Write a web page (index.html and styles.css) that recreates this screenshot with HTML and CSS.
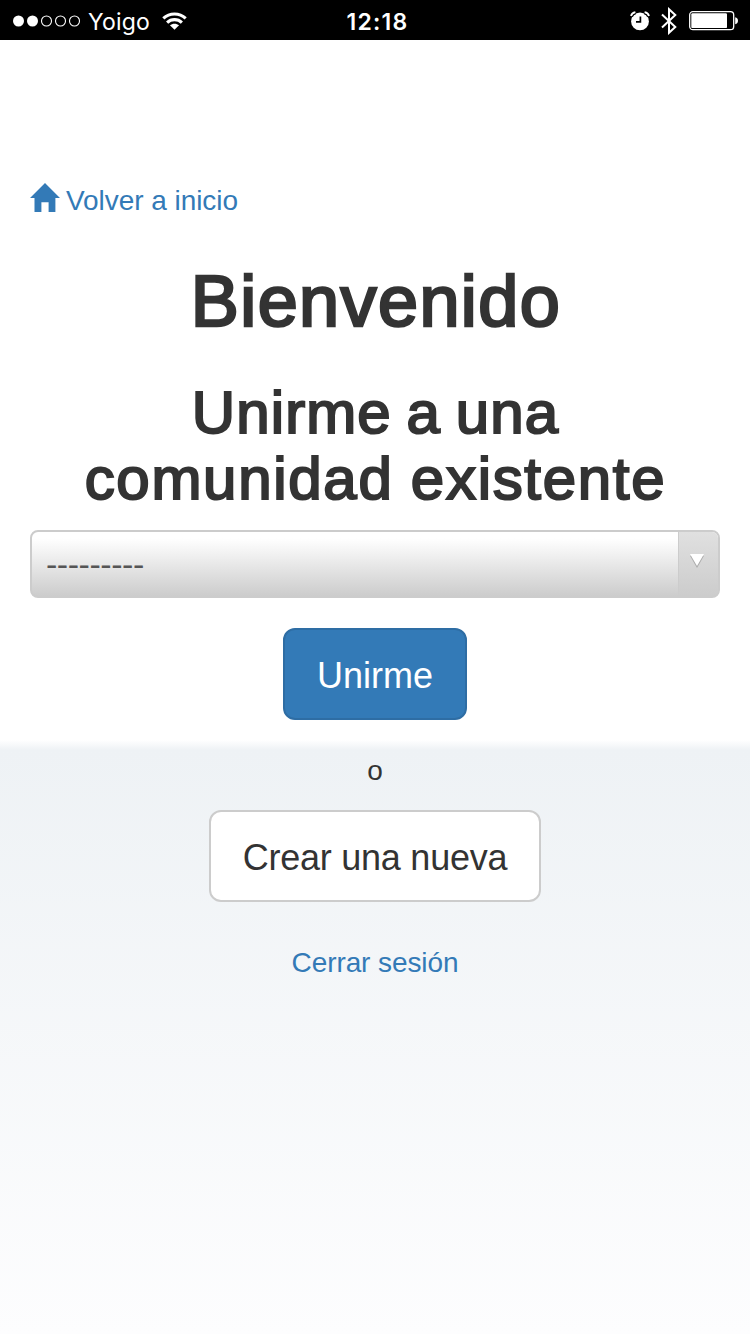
FILE: index.html
```html
<!DOCTYPE html>
<html lang="es">
<head>
<meta charset="utf-8">
<meta name="viewport" content="width=750">
<title>Bienvenido</title>
<link rel="stylesheet" href="styles.css">
</head>
<body>
<header class="status">
  <div class="status-left">
    <svg class="signal" width="68" height="12" viewBox="0 0 68 12"><g fill="#fff"><circle cx="5.5" cy="6" r="5.5"/><circle cx="19.5" cy="6" r="5.5"/></g><g fill="none" stroke="#fff" stroke-width="1.1"><circle cx="33.5" cy="6" r="5"/><circle cx="47.5" cy="6" r="5"/><circle cx="61.5" cy="6" r="5"/></g></svg>
    <span class="carrier">Yoigo</span>
    <svg class="wifi" width="25" height="18" viewBox="0 0 26 19"><g fill="none" stroke="#fff" stroke-width="3.3"><path d="M1.2 6.7C7.8.5 18.2.5 24.8 6.7"/><path d="M5.2 11.1C9.5 7 16.5 7 20.8 11.1"/></g><path d="M8.2 14.1C10.8 11.8 15.2 11.8 17.8 14.1L13 18.8Z" fill="#fff"/></svg>
  </div>
  <span class="clock">12:18</span>
  <div class="status-right">
    <svg width="20" height="20" viewBox="0 0 20 20"><circle cx="10" cy="10.4" r="8.9" fill="#fff"/><path d="M1 5.6Q1.8 2.4 5.4 1.4M19 5.6Q18.2 2.4 14.6 1.4" fill="none" stroke="#000" stroke-width="4"/><path d="M1 5Q1.8 2 5.4 1.2M19 5Q18.2 2 14.6 1.2" fill="none" stroke="#fff" stroke-width="1.8"/><path d="M10.4 5.4V10.9H6" fill="none" stroke="#000" stroke-width="1.7"/></svg>
    <svg class="bluetooth" width="16" height="28" viewBox="0 0 16 28"><path d="M1 7.5L14.3 20L8 25.8V2.2L14.3 8L1 20.5" fill="none" stroke="#fff" stroke-width="2"/></svg>
    <svg class="battery" width="49" height="20" viewBox="0 0 49 20"><rect x=".7" y=".7" width="44" height="18" rx="3.2" fill="none" stroke="#fff" stroke-width="1.3"/><rect x="2.3" y="2.3" width="35.7" height="14.8" rx="1.2" fill="#fff"/><path d="M46.2 6.3Q49 7 49 9.8T46.2 13.3Z" fill="#fff"/></svg>
  </div>
</header>
<main class="page">
  <a class="link home"><svg width="30" height="29" viewBox="0 0 30 29"><path d="M15 0L30 15H25.4V29H18.6V19.3H11.4V29H4.5V15H0Z" fill="#337ab7"/></svg><span>Volver a inicio</span></a>
  <h1 class="title">Bienvenido</h1>
  <h2 class="subtitle"><span class="subtitle-lead">Unirme a una</span><br>comunidad existente</h2>
  <div class="select">
    <span class="select-value">---------</span>
    <span class="select-arrow"><svg width="16" height="16" viewBox="0 0 16 16"><path d="M1 2.8H15L8 15Z" fill="#aaa"/><path d="M1 1H15L8 13Z" fill="#fff"/></svg></span>
  </div>
  <button class="btn btn-primary">Unirme</button>
</main>
<section class="footer">
  <p class="or">o</p>
  <button class="btn btn-default">Crear una nueva</button>
  <a class="link logout">Cerrar sesión</a>
</section>
</body>
</html>
```

FILE: styles.css
```css
* { box-sizing: border-box; }
body {
  margin: 0;
  height: 1334px;
  display: flex;
  flex-direction: column;
  background: #fff;
  color: #333;
  font-family: "Liberation Sans", Arial, sans-serif;
  font-size: 28px;
  line-height: 40px;
}
svg { display: block; flex: none; }
.status {
  height: 40px;
  flex: none;
  display: grid;
  grid-template-columns: 1fr auto 1fr;
  align-items: center;
  padding: 0 12px 0 13px;
  background: #000;
  color: #fff;
  font-family: Inter, Roboto, sans-serif;
  font-size: 23px;
}
.status-left, .status-right { display: flex; align-items: center; }
.status-right { justify-content: flex-end; }
.carrier { margin-left: 7px; padding-top: 2px; letter-spacing: 0.2px; }
.wifi { margin-left: 12px; }
.clock { padding: 2px 0 0 4px; font-weight: 600; font-size: 23px; letter-spacing: 1.2px; }
.bluetooth { margin-left: 11px; }
.battery { margin-left: 12px; }
.page {
  height: 710px;
  flex: none;
  display: flex;
  flex-direction: column;
  align-items: center;
  padding: 141px 30px 0;
  background: linear-gradient(#fff 700px, #eef2f5 710px);
}
.link { color: #337ab7; text-decoration: none; }
.home { align-self: flex-start; display: flex; gap: 6px; letter-spacing: -0.05px; }
.home svg { margin-top: 2px; }
.title, .subtitle { margin: 0; font-weight: 400; text-align: center; }
.title {
  margin-top: 41px;
  padding-left: 2px;
  font-size: 72px;
  line-height: 79px;
  letter-spacing: 1.4px;
  -webkit-text-stroke: 2.6px #333;
}
.subtitle {
  margin-top: 39px;
  padding-left: 1px;
  font-size: 60px;
  line-height: 66px;
  letter-spacing: 1.7px;
  word-spacing: -1px;
  -webkit-text-stroke: 2.1px #333;
}
.subtitle-lead { letter-spacing: 1.1px; word-spacing: -3px; }
.select {
  width: 100%;
  height: 68px;
  margin-top: 18px;
  display: flex;
  border: 2px solid #ccc;
  border-radius: 8px;
  background: linear-gradient(#fff 10%, #ccc);
  overflow: hidden;
}
.select-value {
  flex: 1;
  padding-left: 14px;
  font-size: 34px;
  line-height: 65px;
  letter-spacing: -0.45px;
  color: #555;
}
.select-arrow {
  width: 40px;
  padding: 21px 0 0 10px;
  border-left: 1px solid #ccc;
  background: linear-gradient(#e0e0e0, #ccc);
}
.btn {
  height: 92px;
  padding: 4px 0 0;
  border: 2px solid #ccc;
  border-radius: 12px;
  font-family: inherit;
  font-size: 36px;
  line-height: 48px;
}
.btn-primary {
  width: 184px;
  margin-top: 30px;
  border-color: #2e6da4;
  background: #337ab7;
  color: #fff;
}
.footer {
  flex: 1;
  display: flex;
  flex-direction: column;
  align-items: center;
  background: linear-gradient(#eef2f5, #fdfdfe);
}
.or { margin: 0; padding-top: 1px; }
.btn-default {
  width: 332px;
  margin-top: 19px;
  background: #fff;
  color: #333;
  letter-spacing: -0.25px;
}
.logout { margin-top: 41px; letter-spacing: -0.1px; }
```
